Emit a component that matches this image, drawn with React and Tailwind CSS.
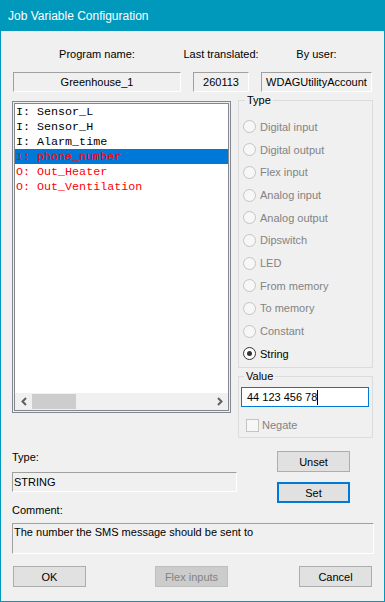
import React from "react";

const font = { fontFamily: '"Liberation Sans", Arial, sans-serif' };
const mono = { fontFamily: '"Liberation Mono", "Courier New", monospace' };

const items = [
  { text: "I: Sensor_L", red: false },
  { text: "I: Sensor_H", red: false },
  { text: "I: Alarm_time", red: false },
  { text: "I: phone_number", red: true, selected: true },
  { text: "O: Out_Heater", red: true },
  { text: "O: Out_Ventilation", red: true },
];

const types = [
  "Digital input",
  "Digital output",
  "Flex input",
  "Analog input",
  "Analog output",
  "Dipswitch",
  "LED",
  "From memory",
  "To memory",
  "Constant",
  "String",
];

const ReadOnlyField = ({ children, className = "" }) => (
  <div
    className={`h-[20px] flex items-center border border-t-[#a0a0a0] border-l-[#a0a0a0] border-b-white border-r-white bg-[#f0f0f0] ${className}`}
  >
    {children}
  </div>
);

const Button = ({ children, className = "", disabled, focused }) => (
  <button
    className={`h-[21px] w-[73px] flex items-center justify-center text-[11px] ${
      disabled
        ? "bg-[#cccccc] border border-[#bfbfbf] text-[#838383]"
        : focused
        ? "bg-[#e1e1e1] border-2 border-[#0078d7] text-black"
        : "bg-[#e1e1e1] border border-[#adadad] text-black"
    } ${className}`}
  >
    {children}
  </button>
);

const Radio = ({ label, checked }) => (
  <div className="h-[22.7px] flex items-center pl-[4px]">
    <span
      className={`w-[13px] h-[13px] rounded-full border flex items-center justify-center ${
        checked ? "border-[#333333] bg-white" : "border-[#c4c4c4] bg-[#f7f7f7]"
      }`}
    >
      {checked && <span className="w-[5px] h-[5px] rounded-full bg-[#333333]" />}
    </span>
    <span className={`ml-[4px] ${checked ? "text-black" : "text-[#838383]"}`}>{label}</span>
  </div>
);

export default function App() {
  return (
    <div
      className="w-[385px] h-[602px] flex flex-col bg-[#0099bc] text-[11px] leading-[16px]"
      style={font}
    >
      <div className="h-[31px] flex items-center pl-[8px] text-white text-[12px]">
        Job Variable Configuration
      </div>

      <div className="flex-1 mx-[1px] mb-[1px] bg-[#f0f0f0] pl-[11px] flex flex-col text-black">
        {/* header labels and fields */}
        <div className="mt-[15px] ml-[1px] flex gap-[12px] h-[16px]">
          <div className="w-[168px] text-center">Program name:</div>
          <div className="w-[56px] flex justify-center whitespace-nowrap">Last translated:</div>
          <div className="w-[111px] text-center">By user:</div>
        </div>
        <div className="mt-[10px] ml-[1px] flex gap-[12px]">
          <ReadOnlyField className="w-[168px] justify-center">Greenhouse_1</ReadOnlyField>
          <ReadOnlyField className="w-[56px] justify-center">260113</ReadOnlyField>
          <ReadOnlyField className="w-[111px] justify-center">WDAGUtilityAccount</ReadOnlyField>
        </div>

        {/* main row */}
        <div className="flex items-start">
          <div className="mt-[9px] w-[219px] h-[312px] border border-[#828790] p-[1px] bg-[#f0f0f0]">
            <div className="h-full border border-[#828790] bg-white flex flex-col">
              <div className="flex-1">
                {items.map((it) => (
                  <div
                    key={it.text}
                    className={`h-[15px] flex items-center pl-[1px] text-[11.7px] whitespace-pre ${
                      it.selected ? "bg-[#0078d7]" : ""
                    } ${it.red ? "text-[#ff0000]" : "text-black"}`}
                    style={mono}
                  >
                    {it.text}
                  </div>
                ))}
              </div>
              <div className="h-[17px] bg-[#f0f0f0] flex items-center">
                <div className="w-[17px] h-[17px] flex items-center justify-center">
                  <svg width="8" height="9" viewBox="0 0 8 9">
                    <path d="M6 1 L2.5 4.5 L6 8" fill="none" stroke="#606060" strokeWidth="2" />
                  </svg>
                </div>
                <div className="w-[44px] h-[15px] bg-[#cdcdcd]" />
                <div className="flex-1" />
                <div className="w-[17px] h-[17px] flex items-center justify-center">
                  <svg width="8" height="9" viewBox="0 0 8 9">
                    <path d="M2 1 L5.5 4.5 L2 8" fill="none" stroke="#606060" strokeWidth="2" />
                  </svg>
                </div>
              </div>
            </div>
          </div>

          <div className="ml-[7px] w-[135px] flex flex-col">
            <fieldset className="h-[276px] border border-[#dcdcdc]">
              <legend className="ml-[6px] px-[2px] leading-[16px]">Type</legend>
              <div className="pt-[7.6px]">
                {types.map((t) => (
                  <Radio key={t} label={t} checked={t === "String"} />
                ))}
              </div>
            </fieldset>
            <fieldset className="h-[70px] border border-[#dcdcdc]">
              <legend className="ml-[5px] px-[2px] leading-[16px]">Value</legend>
              <div className="mt-[3px] ml-[2px] w-[128px] h-[20px] border border-[#0078d7] bg-white flex items-center pl-[5px]">
                <span>44 123 456 78</span>
                <span className="w-[1px] h-[15px] bg-black" />
              </div>
              <div className="mt-[10px] ml-[7px] flex items-center">
                <span className="w-[13px] h-[13px] border border-[#c4c4c4] bg-[#f7f7f7]" />
                <span className="ml-[3px] text-[#838383]">Negate</span>
              </div>
            </fieldset>
          </div>
        </div>

        {/* type / buttons */}
        <div className="flex items-start">
          <div className="w-[225px] flex flex-col">
            <div className="mt-[11px]">Type:</div>
            <ReadOnlyField className="mt-[7px] h-[19px] pl-[1px]">STRING</ReadOnlyField>
            <div className="mt-[10px]">Comment:</div>
          </div>
          <div className="ml-[40px] flex flex-col">
            <Button className="mt-[13px]">Unset</Button>
            <Button focused className="mt-[10px] h-[20px]">
              Set
            </Button>
          </div>
        </div>

        <div className="mt-[5px] w-[362px] h-[31px] border border-t-[#a0a0a0] border-l-[#a0a0a0] border-b-white border-r-white pl-[1px] pt-0">
          The number the SMS message should be sent to
        </div>

        <div className="mt-[12px] ml-[1px] w-[359px] flex">
          <Button>OK</Button>
          <Button disabled className="ml-[69px]">
            Flex inputs
          </Button>
          <Button className="ml-[71px]">Cancel</Button>
        </div>
      </div>
    </div>
  );
}
